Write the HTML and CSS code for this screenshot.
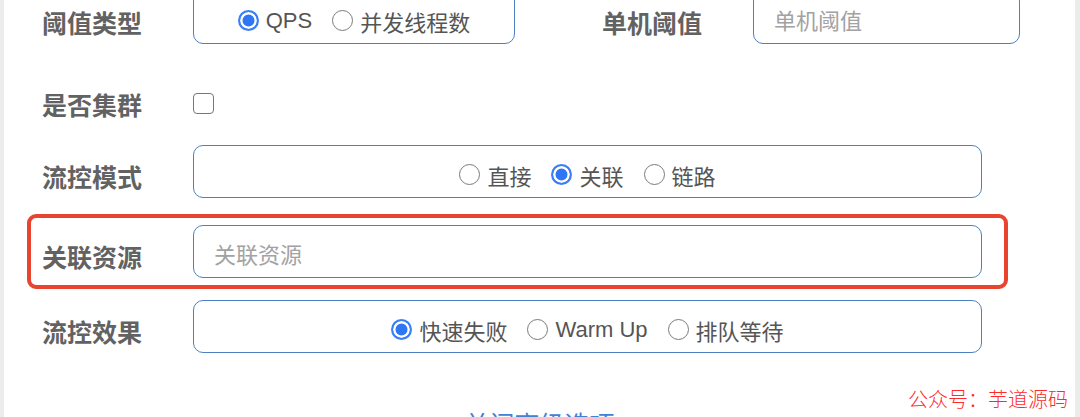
FILE: index.html
```html
<!DOCTYPE html>
<html lang="zh-CN">
<head>
  <meta charset="UTF-8">
  <meta name="viewport" content="width=device-width, initial-scale=1.0">
  <title>新增流控规则</title>
  <link rel="stylesheet" href="styles.css">
</head>
<body>
  <div class="panel">
    <form class="rule-form">
      <!-- 阈值类型 / 单机阈值 -->
      <div class="row row-first">
        <label class="label">阈值类型</label>
        <div class="field field-grade radio-group">
          <label class="radio"><input type="radio" name="grade" checked>QPS</label>
          <label class="radio"><input type="radio" name="grade">并发线程数</label>
        </div>
        <label class="label label-second">单机阈值</label>
        <input type="text" class="field text-input input-count" placeholder="单机阈值">
      </div>

      <!-- 是否集群 -->
      <div class="row row-check">
        <label class="label">是否集群</label>
        <input type="checkbox" class="checkbox">
      </div>

      <!-- 流控模式 -->
      <div class="row row-mode">
        <label class="label">流控模式</label>
        <div class="field field-wide radio-group">
          <label class="radio"><input type="radio" name="strategy">直接</label>
          <label class="radio"><input type="radio" name="strategy" checked>关联</label>
          <label class="radio"><input type="radio" name="strategy">链路</label>
        </div>
      </div>

      <!-- 关联资源 -->
      <div class="row row-highlight">
        <label class="label">关联资源</label>
        <input type="text" class="field field-wide text-input" placeholder="关联资源">
      </div>

      <!-- 流控效果 -->
      <div class="row row-effect">
        <label class="label">流控效果</label>
        <div class="field field-wide radio-group">
          <label class="radio"><input type="radio" name="behavior" checked>快速失败</label>
          <label class="radio"><input type="radio" name="behavior">Warm Up</label>
          <label class="radio"><input type="radio" name="behavior">排队等待</label>
        </div>
      </div>
    </form>

    <div class="more"><a href="#" class="more-link">关闭高级选项</a></div>

    <div class="watermark">公众号：芋道源码</div>
  </div>
</body>
</html>
```

FILE: styles.css
```css
* {
  box-sizing: border-box;
}

body {
  margin: 0;
  width: 1080px;
  height: 417px;
  overflow: hidden;
  background-color: white;
  font-family: 'Liberation Sans', 'Noto Sans CJK SC', sans-serif;
}

.panel {
  position: relative;
  height: 417px;
  border-left: 4px solid #ececec;
  border-right: 5px solid #ececec;
  overflow: hidden;
}

.rule-form {
  display: flex;
  flex-direction: column;
  padding: 0 67px 0 23px;
}

.row {
  display: flex;
  align-items: center;
  height: 53px;
  padding: 0 26px 0 15px;
}

.row-first {
  margin-top: -9px;
}

.row-check {
  margin-top: 33px;
}

.row-mode {
  margin-top: 15px;
}

.row-highlight {
  height: 75px;
  margin-top: 16px;
  padding: 7px 22px 7px 11px;
  border: 4px solid #e9442f;
  border-radius: 9px;
}

.row-effect {
  margin-top: 11px;
}

.label {
  flex: 0 0 151px;
  margin-top: 8px;
  font-family: 'Noto Sans CJK SC', sans-serif;
  font-size: 25px;
  font-weight: bold;
  color: #626262;
}

.row-check .label {
  margin-top: 0;
}

.label-second {
  margin-left: 87px;
}

.field {
  height: 53px;
  border: 1.5px solid #4d80c2;
  border-radius: 10px;
  background-color: white;
}

.field-grade {
  flex: 0 0 322px;
}

.input-count {
  flex: 0 0 229px;
}

.field-wide {
  flex: 1;
}

.text-input {
  padding: 3px 0 0 20px;
  font-family: 'Noto Sans CJK SC', sans-serif;
  font-size: 22px;
  color: #555;
  outline: none;
}

.text-input::placeholder {
  color: #a2a2a2;
}

.radio-group {
  display: flex;
  justify-content: center;
  align-items: center;
  gap: 20px;
  padding-top: 6px;
}

.radio {
  display: flex;
  align-items: center;
  gap: 7px;
  font-size: 22px;
  color: #555;
  cursor: pointer;
}

.radio input {
  appearance: none;
  width: 21px;
  height: 21px;
  margin: 0;
  border: 1.5px solid #7b7b7b;
  border-radius: 50%;
  background-color: white;
}

.radio input:checked {
  border: 2px solid #3a7ff5;
  background-color: #2f76f4;
  box-shadow: inset 0 0 0 2.5px white;
}

.checkbox {
  appearance: none;
  width: 21px;
  height: 21px;
  margin: 0;
  border: 1.5px solid #777;
  border-radius: 4px;
  background-color: white;
}

.more {
  margin-top: 52px;
  text-align: center;
}

.more-link {
  font-family: 'Noto Sans CJK SC', sans-serif;
  font-size: 25px;
  color: #3f83d7;
  text-decoration: none;
}

.watermark {
  position: absolute;
  right: 7px;
  top: 389px;
  font-family: 'Noto Sans CJK SC', sans-serif;
  font-size: 20px;
  font-weight: 300;
  line-height: 1;
  color: #ff2b2b;
}
```
